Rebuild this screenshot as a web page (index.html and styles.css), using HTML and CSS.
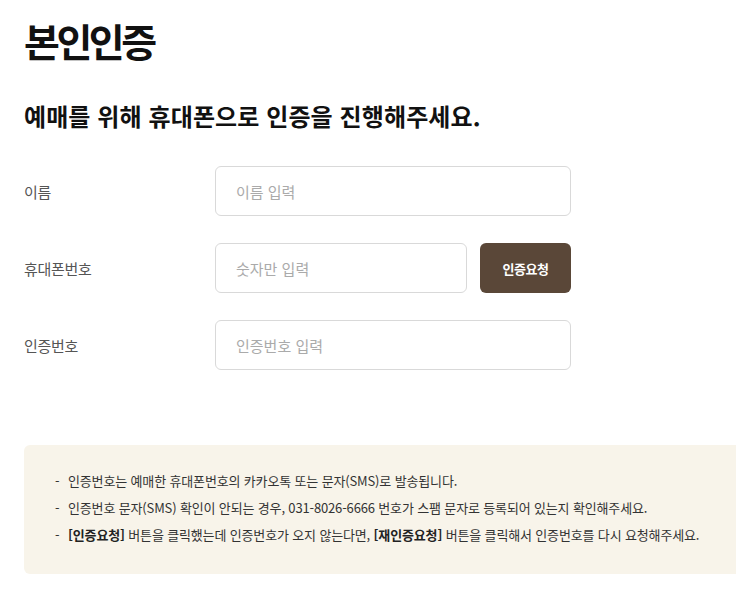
FILE: index.html
```html
<!DOCTYPE html>
<html lang="ko">
<head>
    <meta charset="UTF-8">
    <meta name="viewport" content="width=device-width, initial-scale=1.0">
    <title>본인인증</title>
    <link rel="stylesheet" href="styles.css">
</head>
<body>

    <div class="page">
        <h1 class="title">본인인증</h1>
        <h2 class="subtitle">예매를 위해 휴대폰으로 인증을 진행해주세요.</h2>

        <form class="verify-form">
            <div class="row">
                <label for="name">이름</label>
                <div class="field">
                    <input type="text" id="name" placeholder="이름 입력">
                </div>
            </div>

            <div class="row">
                <label for="phone">휴대폰번호</label>
                <div class="field">
                    <input type="text" id="phone" placeholder="숫자만 입력">
                    <button type="button" class="request-btn">인증요청</button>
                </div>
            </div>

            <div class="row">
                <label for="code">인증번호</label>
                <div class="field">
                    <input type="text" id="code" placeholder="인증번호 입력">
                </div>
            </div>
        </form>

        <div class="notice">
            <ul>
                <li>인증번호는 예매한 휴대폰번호의 카카오톡 또는 문자(SMS)로 발송됩니다.</li>
                <li>인증번호 문자(SMS) 확인이 안되는 경우, 031-8026-6666 번호가 스팸 문자로 등록되어 있는지 확인해주세요.</li>
                <li><b>[인증요청]</b> 버튼을 클릭했는데 인증번호가 오지 않는다면, <b>[재인증요청]</b> 버튼을 클릭해서 인증번호를 다시 요청해주세요.</li>
            </ul>
        </div>
    </div>

</body>
</html>
```

FILE: styles.css
```css
* {
    box-sizing: border-box;
}

html, body {
    overflow-x: hidden;
}

body {
    margin: 0;
    font-family: "Noto Sans CJK KR", "Noto Sans", sans-serif;
    color: #111;
    background: #fff;
}

.page {
    padding: 8px 0 0 24px;
}

.title {
    margin: 0;
    font-size: 39px;
    font-weight: 700;
    line-height: 64px;
    letter-spacing: -3.5px;
}

.subtitle {
    margin: 27px 0 0;
    font-size: 24px;
    font-weight: 700;
    line-height: 34px;
    letter-spacing: 0.1px;
}

.verify-form {
    margin-top: 33px;
    width: 547px;
}

.row {
    display: flex;
    align-items: center;
    margin-bottom: 27px;
}

.row label {
    width: 191px;
    font-size: 15px;
    color: #555;
    letter-spacing: -0.3px;
}

.field {
    flex: 1;
    display: flex;
    gap: 13px;
}

.field input {
    flex: 1;
    height: 50px;
    padding: 0 20px;
    border: 1px solid #d9d9d9;
    border-radius: 6px;
    font-family: inherit;
    font-size: 15px;
    color: #333;
}

.field input::placeholder {
    color: #aaa;
}

.request-btn {
    width: 91px;
    height: 50px;
    border: none;
    border-radius: 6px;
    background: #5a4738;
    color: #fff;
    font-family: inherit;
    font-size: 13px;
    font-weight: 700;
    letter-spacing: -0.5px;
    cursor: pointer;
}

.notice {
    margin-top: 75px;
    background: #f8f4ea;
    border-radius: 6px 0 0 6px;
    padding: 22px 0 26px 31px;
}

.notice ul {
    margin: 0;
    padding: 0;
    list-style: none;
}

.notice li {
    font-size: 13px;
    line-height: 27px;
    color: #333;
    letter-spacing: -0.15px;
}

.notice li::before {
    content: "-";
    display: inline-block;
    width: 13px;
}

.notice b {
    font-weight: 700;
    color: #222;
}
```
